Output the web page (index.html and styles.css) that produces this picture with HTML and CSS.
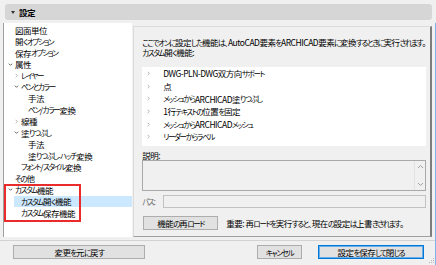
FILE: index.html
```html
<!DOCTYPE html>
<html lang="ja">
<head>
<meta charset="utf-8">
<title>設定</title>
<link rel="stylesheet" href="styles.css">
</head>
<body>
<div class="dialog">
  <div class="header"><span class="tri"></span><span class="title">設定</span></div>
  <div class="main">
    <div class="sidebar">
      <ul class="tree">
        <li class="l0"><i class="chev"></i>図面単位</li>
        <li class="l0"><i class="chev"></i>開<span class="k">くオプション</span></li>
        <li class="l0"><i class="chev"></i>保存<span class="k">オプション</span></li>
        <li class="l0"><i class="chev down"><svg viewBox="0 0 6 6"><path d="M1 2 L3 4 L5 2"/></svg></i>属性</li>
        <li class="l1"><i class="chev right"><svg viewBox="0 0 6 6"><path d="M2 1 L4 3 L2 5"/></svg></i><span class="k">レイヤー</span></li>
        <li class="l1"><i class="chev down"><svg viewBox="0 0 6 6"><path d="M1 2 L3 4 L5 2"/></svg></i><span class="k">ペンとカラー</span></li>
        <li class="l2"><i class="chev"></i>手法</li>
        <li class="l2"><i class="chev"></i><span class="k">ペン</span>/<span class="k">カラー</span>変換</li>
        <li class="l1"><i class="chev right"><svg viewBox="0 0 6 6"><path d="M2 1 L4 3 L2 5"/></svg></i>線種</li>
        <li class="l1"><i class="chev down"><svg viewBox="0 0 6 6"><path d="M1 2 L3 4 L5 2"/></svg></i>塗<span class="k">りつぶし</span></li>
        <li class="l2"><i class="chev"></i>手法</li>
        <li class="l2"><i class="chev"></i>塗<span class="k">りつぶし</span>-<span class="k">ハッチ</span>変換</li>
        <li class="l1"><i class="chev"></i><span class="k">フォント</span>/<span class="k">スタイル</span>変換</li>
        <li class="l0"><i class="chev"></i><span class="k">その</span>他</li>
        <li class="l0"><i class="chev down"><svg viewBox="0 0 6 6"><path d="M1 2 L3 4 L5 2"/></svg></i><span class="k">カスタム</span>機能</li>
        <li class="l1 sel"><i class="chev"></i><span class="k">カスタム</span>開<span class="k">く</span>機能</li>
        <li class="l1"><i class="chev"></i><span class="k">カスタム</span>保存機能</li>
      </ul>
    </div>
    <div class="group">
      <p class="intro"><span class="k">ここでオンに</span>設定<span class="k">した</span>機能<span class="k">は</span>、AutoCAD要素<span class="k">を</span>ARCHICAD要素<span class="k">に</span>変換<span class="k">するときに</span>実行<span class="k">されます</span>。<br><span class="k">カスタム</span>開<span class="k">く</span>機能:</p>
      <ul class="list">
        <li><i class="lchev"><svg viewBox="0 0 6 6"><path d="M2 1 L4 3 L2 5"/></svg></i>DWG-PLN-DWG双方向<span class="k">サポート</span></li>
        <li><i class="lchev"><svg viewBox="0 0 6 6"><path d="M2 1 L4 3 L2 5"/></svg></i>点</li>
        <li><i class="lchev"><svg viewBox="0 0 6 6"><path d="M2 1 L4 3 L2 5"/></svg></i><span class="k">メッシュから</span>ARCHICAD塗<span class="k">りつぶし</span></li>
        <li><i class="lchev"><svg viewBox="0 0 6 6"><path d="M2 1 L4 3 L2 5"/></svg></i>1行<span class="k">テキストの</span>位置<span class="k">を</span>固定</li>
        <li><i class="lchev"><svg viewBox="0 0 6 6"><path d="M2 1 L4 3 L2 5"/></svg></i><span class="k">メッシュから</span>ARCHICAD<span class="k">メッシュ</span></li>
        <li><i class="lchev"><svg viewBox="0 0 6 6"><path d="M2 1 L4 3 L2 5"/></svg></i><span class="k">リーダーからラベル</span></li>
      </ul>
      <div class="desc-label">説明:</div>
      <div class="desc">
        <div class="desc-text"></div>
        <div class="scroll">
          <svg viewBox="0 0 7 5"><path d="M1 4 L3.5 1.5 L6 4"/></svg>
          <svg viewBox="0 0 7 5"><path d="M1 1 L3.5 3.5 L6 1"/></svg>
        </div>
      </div>
      <div class="path-row"><span class="path-label"><span class="k">パス</span>:</span><div class="path-input"></div></div>
      <div class="reload-row"><button class="btn reload">機能<span class="k">の</span>再<span class="k">ロード</span></button><span class="note">重要: 再<span class="k">ロードを</span>実行<span class="k">すると</span>、現在<span class="k">の</span>設定<span class="k">は</span>上書<span class="k">きされます</span>。</span></div>
    </div>
  </div>
  <div class="footer">
    <button class="btn revert">変更<span class="k">を</span>元<span class="k">に</span>戻<span class="k">す</span></button>
    <div class="spacer"></div>
    <button class="btn cancel"><span class="k">キャンセル</span></button>
    <button class="btn save">設定<span class="k">を</span>保存<span class="k">して</span>閉<span class="k">じる</span></button>
  </div>
</div>
<div class="annot"></div>
<div class="edge"></div>
<svg class="grip" viewBox="0 0 8 8"><rect x="6" y="2" width="1" height="1"/><rect x="4" y="4" width="1" height="1"/><rect x="6" y="4" width="1" height="1"/><rect x="2" y="6" width="1" height="1"/><rect x="4" y="6" width="1" height="1"/><rect x="6" y="6" width="1" height="1"/></svg>
</body>
</html>
```
FILE: styles.css
```css
* { box-sizing: border-box; }
html, body { margin: 0; padding: 0; }
body {
  width: 436px;
  height: 265px;
  overflow: hidden;
  position: relative;
  background: #f0f0f0;
  font-family: "Noto Sans CJK JP", "Noto Sans", sans-serif;
  font-size: 8.5px;
  letter-spacing: -0.5px;
  font-feature-settings: "palt" 1;
  color: #000;
}
.k { font-size: 7.5px; letter-spacing: -1.3px; }
.dialog { display: flex; flex-direction: column; height: 265px; }
.header {
  margin: 4px 4px 0 5px;
  height: 16px;
  background: #d6d6d6;
  border-radius: 3px;
  display: flex;
  align-items: center;
  gap: 4px;
  padding-left: 6px;
  font-weight: bold;
}
.tri {
  width: 0; height: 0;
  border-top: 3px solid #333;
  border-left: 2.5px solid transparent;
  border-right: 2.5px solid transparent;
}
.main { display: flex; height: 214px; margin-top: 3px; }
.sidebar {
  width: 134px;
  margin-left: 3px;
  background: #fff;
  border-left: 1px solid #a0a0a0;
}
.tree { list-style: none; margin: 0; padding: 1px 0 0; }
.tree li {
  height: 11.45px;
  display: flex;
  align-items: center;
  white-space: nowrap;
}
.tree .l0 { padding-left: 4px; }
.tree .l1 { padding-left: 10px; }
.tree .l2 { padding-left: 17px; }
.tree .sel { margin-left: 10px; padding-left: 0; background: #cce8ff; }
.chev { display: inline-flex; flex: none; width: 7px; height: 7px; align-items: center; justify-content: flex-start; }
.chev svg, .lchev svg { width: 5px; height: 5px; fill: none; stroke-width: 1; }
.chev.down svg { stroke: #444; }
.chev.right svg { stroke: #a6a6a6; }
.group {
  flex: 1;
  margin: 3px 4px 0 1px;
  border-top: 1px solid #dcdcdc;
  border-left: 1px solid #dcdcdc;
  border-right: 2px solid #7d7d7d;
  border-bottom: 1px solid #a0a0a0;
  padding: 11px 4px 0 8px;
  display: flex;
  flex-direction: column;
}
.intro { margin: 0; line-height: 9.5px; white-space: nowrap; }
.list {
  list-style: none;
  margin: 10px 0 0;
  padding: 0 0 0 4px;
  height: 79px;
  background: #fff;
}
.list li { height: 12.7px; display: flex; align-items: center; white-space: nowrap; }
.lchev { display: inline-flex; flex: none; width: 17px; }
.lchev svg { stroke: #a6a6a6; }
.desc-label { margin-top: 4px; line-height: 10px; }
.desc {
  height: 31px;
  display: flex;
  border: 1px solid #a9a9a9;
  background: #f0f0f0;
}
.desc-text { flex: 1; }
.scroll {
  width: 11px;
  border-left: 1px solid #e2e2e2;
  display: flex;
  flex-direction: column;
  justify-content: space-between;
  align-items: center;
  padding: 3px 0;
}
.scroll svg { width: 7px; height: 5px; fill: none; stroke: #a0a0a0; stroke-width: 1; }
.path-row { margin-top: 4px; height: 12.5px; display: flex; align-items: center; }
.path-label { width: 21px; color: #666; }
.path-input { flex: 1; height: 12.5px; border: 1px solid #c2c2c2; background: #f0f0f0; }
.reload-row { margin-top: 8.5px; display: flex; align-items: center; }
.btn {
  font: inherit;
  letter-spacing: inherit;
  font-feature-settings: "palt" 1;
  height: 14px;
  padding: 0;
  background: #e1e1e1;
  border: 1px solid #adadad;
  color: #000;
  line-height: 12px;
}
.reload { width: 75px; margin-left: 1px; }
.note { margin-left: 8px; white-space: nowrap; }
.footer {
  margin-top: 3px;
  border-top: 1px solid #d3d3d3;
  padding: 4px 12px 0 13px;
  display: flex;
}
.revert { width: 132px; }
.spacer { flex: 1; }
.cancel { width: 45px; }
.save { width: 106px; margin-left: 16px; border-color: #0078d7; box-shadow: inset 0 0 0 1px #6aaee8; }
.annot {
  position: absolute;
  left: 4px; top: 184px;
  width: 77px; height: 38px;
  border: 2px solid #ea2b2b;
}
.edge {
  position: absolute;
  right: 0; top: 23px;
  width: 1px; height: 242px;
  background: #7eb4ea;
}
.grip { position: absolute; right: 1px; bottom: 1px; width: 8px; height: 8px; fill: #b5b5b5; }
```
